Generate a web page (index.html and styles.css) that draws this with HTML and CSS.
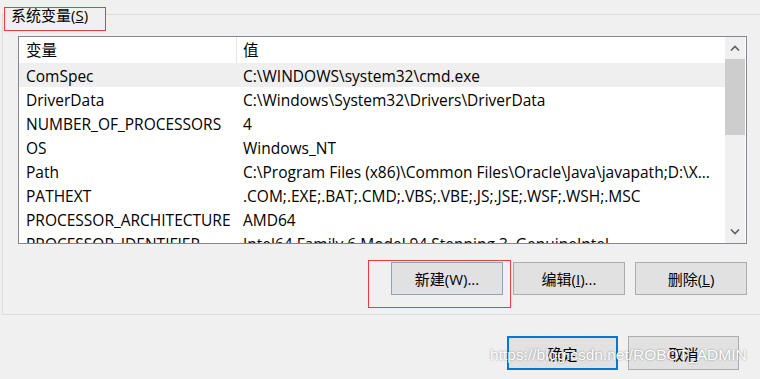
FILE: index.html
```html
<!DOCTYPE html>
<html lang="zh-CN">
<head>
    <meta charset="UTF-8">
    <meta name="viewport" content="width=device-width, initial-scale=1.0">
    <title>环境变量</title>
    <link rel="stylesheet" href="styles.css">
</head>
<body>
    <div class="dialog">
        <div class="group">
            <div class="group-title">系统变量(<u>S</u>)</div>
            <div class="group-body">
                <div class="list">
                    <div class="list-body">
                        <div class="list-head">
                            <div class="col-name">变量</div>
                            <div class="col-value">值</div>
                        </div>
                        <div class="row selected">
                            <div class="col-name">ComSpec</div>
                            <div class="col-value">C:\WINDOWS\system32\cmd.exe</div>
                        </div>
                        <div class="row">
                            <div class="col-name">DriverData</div>
                            <div class="col-value">C:\Windows\System32\Drivers\DriverData</div>
                        </div>
                        <div class="row">
                            <div class="col-name">NUMBER_OF_PROCESSORS</div>
                            <div class="col-value">4</div>
                        </div>
                        <div class="row">
                            <div class="col-name">OS</div>
                            <div class="col-value">Windows_NT</div>
                        </div>
                        <div class="row">
                            <div class="col-name">Path</div>
                            <div class="col-value">C:\Program Files (x86)\Common Files\Oracle\Java\javapath;D:\X...</div>
                        </div>
                        <div class="row">
                            <div class="col-name">PATHEXT</div>
                            <div class="col-value">.COM;.EXE;.BAT;.CMD;.VBS;.VBE;.JS;.JSE;.WSF;.WSH;.MSC</div>
                        </div>
                        <div class="row">
                            <div class="col-name">PROCESSOR_ARCHITECTURE</div>
                            <div class="col-value">AMD64</div>
                        </div>
                        <div class="row">
                            <div class="col-name">PROCESSOR_IDENTIFIER</div>
                            <div class="col-value">Intel64 Family 6 Model 94 Stepping 3, GenuineIntel</div>
                        </div>
                    </div>
                    <div class="scrollbar">
                        <div class="sb-btn">
                            <svg width="10" height="6" viewBox="0 0 10 6"><path d="M1 5.5 L5 1.5 L9 5.5" fill="none" stroke="#606060" stroke-width="1.6"/></svg>
                        </div>
                        <div class="sb-track"><div class="sb-thumb"></div></div>
                        <div class="sb-btn">
                            <svg width="10" height="6" viewBox="0 0 10 6"><path d="M1 0.5 L5 4.5 L9 0.5" fill="none" stroke="#606060" stroke-width="1.6"/></svg>
                        </div>
                    </div>
                </div>
                <div class="actions">
                    <button class="btn btn-hot marked">新建(W)...</button>
                    <button class="btn">编辑(<u>I</u>)...</button>
                    <button class="btn">删除(<u>L</u>)</button>
                </div>
            </div>
        </div>
        <div class="footer">
            <button class="btn btn-default">确定</button>
            <button class="btn">取消</button>
        </div>
        <div class="watermark">https://blog.csdn.net/ROBOT_ADMIN</div>
    </div>
</body>
</html>
```

FILE: styles.css
```css
body {
    margin: 0;
    background-color: #f0f0f0;
    font-family: "Open Sans", "Noto Sans CJK SC", sans-serif;
    font-size: 15px;
    color: #000;
}
.dialog {
    position: relative;
    width: 760px;
    height: 379px;
    overflow: hidden;
}
.group {
    margin: 14px -10px 0 2px;
    border: 1px solid #dcdcdc;
    padding-bottom: 19px;
}
.group-title {
    width: 94px;
    height: 22px;
    margin: -8px 0 0 1px;
    padding-left: 6px;
    line-height: 15px;
    border: 1px solid #f23a3a;
    background-color: #f0f0f0;
}
.group-body {
    width: 729px;
    margin-left: 15px;
}
.list {
    display: flex;
    height: 206px;
    margin-top: 5px;
    border: 1px solid #828790;
    background: white;
    font-size: 15.5px;
}
.list-body {
    flex: 1;
    overflow: hidden;
}
.list-head, .row {
    display: flex;
    white-space: nowrap;
}
.list-head {
    height: 26px;
    line-height: 27px;
}
.row {
    height: 24px;
    line-height: 26px;
}
.row.selected {
    background-color: #efefef;
}
.col-name {
    width: 210px;
    padding-left: 7px;
    flex-shrink: 0;
}
.list-head .col-name {
    border-right: 1px solid #e5e5e5;
}
.row .col-name {
    margin-right: 1px;
}
.col-value {
    padding-left: 6px;
    overflow: hidden;
}
.scrollbar {
    display: flex;
    flex-direction: column;
    width: 20px;
    margin-right: 1px;
    background-color: #f0f0f0;
}
.sb-btn {
    height: 22px;
    display: flex;
    align-items: center;
    justify-content: center;
}
.sb-track {
    flex: 1;
}
.sb-thumb {
    height: 76px;
    background-color: #cdcdcd;
}
.actions {
    display: flex;
    justify-content: flex-end;
    gap: 10px;
    margin-top: 18px;
}
.btn {
    width: 112px;
    height: 33px;
    padding: 0;
    border: 1px solid #adadad;
    background-color: #e1e1e1;
    font-family: inherit;
    font-size: 15px;
    color: #000;
}
.btn-hot {
    border-color: #8aa4bf;
}
.marked {
    position: relative;
}
.marked::after {
    content: "";
    position: absolute;
    left: -24px;
    top: -3px;
    width: 141px;
    height: 46px;
    border: 1px solid #f23a3a;
}
.footer {
    display: flex;
    justify-content: flex-end;
    gap: 10px;
    margin-top: 21px;
    padding-right: 21px;
}
.footer .btn {
    width: 111px;
    height: 34px;
}
.btn-default {
    border: 2px solid #0078d7;
}
.watermark {
    position: absolute;
    left: 490px;
    top: 346px;
    font-family: "Liberation Sans", sans-serif;
    font-size: 15.5px;
    color: #fff;
    text-shadow: 0 0 2px rgba(0, 0, 0, 0.45);
    white-space: nowrap;
}
```
